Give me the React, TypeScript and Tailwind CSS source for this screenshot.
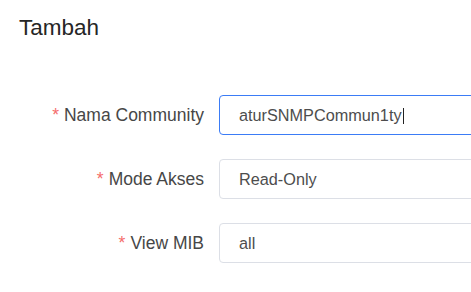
import React from "react";

function Row({ label, value, focused, cursor }: { label: string; value: string; focused?: boolean; cursor?: boolean }) {
  return (
    <div className="flex items-center h-[40px]">
      <div className="w-[219px] shrink-0 pr-[15px] flex justify-end items-center text-[17.5px] text-[#474747]">
        <span className="text-[#f56c6c] mr-[5px]">*</span>
        <span>{label}</span>
      </div>
      <div
        className={
          "shrink-0 w-[320px] h-[40px] rounded-[4px] border flex items-center pl-[19px] text-[16.25px] text-[#4d4d4d] " +
          (focused ? "border-[#3b7cf6]" : "border-[#dcdfe6]")
        }
      >
        <span>{value}</span>
        {cursor && <span className="inline-block w-[1px] h-[16px] bg-[#222] ml-[1px] mt-[1px]" />}
      </div>
    </div>
  );
}

export default function App() {
  return (
    <div className="bg-white w-[471px] h-[292px] overflow-hidden font-['Liberation_Sans',Arial,sans-serif]">
      <div className="pl-[19px] pt-[13px] text-[22.5px] leading-[30px] text-[#262626]">Tambah</div>
      <div className="mt-[52px] flex flex-col gap-[24px]">
        <Row label="Nama Community" value="aturSNMPCommun1ty" focused cursor />
        <Row label="Mode Akses" value="Read-Only" />
        <Row label="View MIB" value="all" />
      </div>
    </div>
  );
}
